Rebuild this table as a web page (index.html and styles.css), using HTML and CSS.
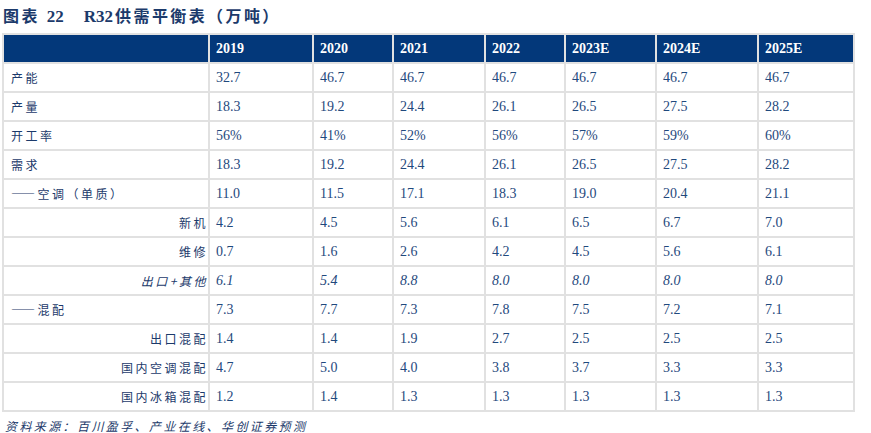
FILE: index.html
```html
<!DOCTYPE html>
<html lang="zh">
<head>
<meta charset="utf-8">
<link rel="stylesheet" href="styles.css">
</head>
<body>
<div class="title"><span class="t-cn">图表</span><span class="t-num">22</span><span class="t-name">R32<span class="t-cn">供需平衡表（万吨）</span></span></div>
<table class="tbl">
  <colgroup>
    <col class="c0"><col class="c1"><col class="c2"><col class="c3"><col class="c4"><col class="c5"><col class="c6"><col class="c7">
  </colgroup>
  <thead>
    <tr><th></th><th>2019</th><th>2020</th><th>2021</th><th>2022</th><th>2023E</th><th>2024E</th><th>2025E</th></tr>
  </thead>
  <tbody>
    <tr><td class="lbl">产能</td><td>32.7</td><td>46.7</td><td>46.7</td><td>46.7</td><td>46.7</td><td>46.7</td><td>46.7</td></tr>
    <tr><td class="lbl">产量</td><td>18.3</td><td>19.2</td><td>24.4</td><td>26.1</td><td>26.5</td><td>27.5</td><td>28.2</td></tr>
    <tr><td class="lbl">开工率</td><td>56%</td><td>41%</td><td>52%</td><td>56%</td><td>57%</td><td>59%</td><td>60%</td></tr>
    <tr><td class="lbl">需求</td><td>18.3</td><td>19.2</td><td>24.4</td><td>26.1</td><td>26.5</td><td>27.5</td><td>28.2</td></tr>
    <tr><td class="lbl">——空调（单质）</td><td>11.0</td><td>11.5</td><td>17.1</td><td>18.3</td><td>19.0</td><td>20.4</td><td>21.1</td></tr>
    <tr><td class="lbl sub">新机</td><td>4.2</td><td>4.5</td><td>5.6</td><td>6.1</td><td>6.5</td><td>6.7</td><td>7.0</td></tr>
    <tr><td class="lbl sub">维修</td><td>0.7</td><td>1.6</td><td>2.6</td><td>4.2</td><td>4.5</td><td>5.6</td><td>6.1</td></tr>
    <tr class="it"><td class="lbl sub">出口+其他</td><td>6.1</td><td>5.4</td><td>8.8</td><td>8.0</td><td>8.0</td><td>8.0</td><td>8.0</td></tr>
    <tr><td class="lbl">——混配</td><td>7.3</td><td>7.7</td><td>7.3</td><td>7.8</td><td>7.5</td><td>7.2</td><td>7.1</td></tr>
    <tr><td class="lbl sub">出口混配</td><td>1.4</td><td>1.4</td><td>1.9</td><td>2.7</td><td>2.5</td><td>2.5</td><td>2.5</td></tr>
    <tr><td class="lbl sub">国内空调混配</td><td>4.7</td><td>5.0</td><td>4.0</td><td>3.8</td><td>3.7</td><td>3.3</td><td>3.3</td></tr>
    <tr><td class="lbl sub">国内冰箱混配</td><td>1.2</td><td>1.4</td><td>1.3</td><td>1.3</td><td>1.3</td><td>1.3</td><td>1.3</td></tr>
  </tbody>
</table>
<div class="source">资料来源：百川盈孚、产业在线、华创证券预测</div>
</body>
</html>
```
FILE: styles.css
```css
html, body {
  margin: 0;
  padding: 0;
  background: #ffffff;
}
body {
  font-family: "Liberation Serif", "Noto Sans CJK SC", serif;
  color: #1f497d;
}
.title {
  height: 33px;
  box-sizing: border-box;
  padding: 5px 0 0 3px;
  font-family: "Liberation Serif", "Noto Sans CJK SC", serif;
  font-weight: bold;
  font-size: 17px;
  line-height: 21px;
  color: #1c3a6b;
  white-space: nowrap;
}
.title .t-cn {
  font-family: "Noto Sans CJK SC", sans-serif;
  font-size: 16px;
  letter-spacing: 2.4px;
}
.title .t-num {
  margin-left: 7px;
}
.title .t-name {
  margin-left: 20px;
}
.title .t-name .t-cn {
  margin-left: 2px;
}
.tbl {
  margin-left: 2px;
  width: 851px;
  table-layout: fixed;
  border-collapse: collapse;
  border: 2px solid #e1e1e1;
}
.c0 { width: 206px; }
.c1 { width: 104px; }
.c2 { width: 80px; }
.c3 { width: 92px; }
.c4 { width: 80px; }
.c5 { width: 91px; }
.c6 { width: 102px; }
.c7 { width: 96px; }
.tbl th,
.tbl td {
  height: 29px;
  padding: 0 0 0 6px;
  border: 2px solid #e1e1e1;
  text-align: left;
  vertical-align: middle;
  font-size: 14px;
  line-height: 16px;
  white-space: nowrap;
  box-sizing: border-box;
}
.tbl th {
  background: #03387a;
  color: #ffffff;
  font-weight: bold;
  border-color: #e1e1e1;
}
.tbl td {
  color: #1f497d;
}
.tbl td.lbl {
  font-family: "Noto Sans CJK SC", sans-serif;
  font-size: 12px;
  letter-spacing: 2.5px;
  padding-left: 7px;
  color: #1c3a6b;
}
.tbl td.sub {
  text-align: right;
  padding-left: 0;
  padding-right: 0;
}
.tbl tr.it td {
  font-style: italic;
}
.source {
  padding: 6px 0 0 5px;
  font-family: "Noto Sans CJK SC", sans-serif;
  font-size: 12px;
  letter-spacing: 2.4px;
  font-style: italic;
  line-height: 16px;
  color: #1c3a6b;
}
```
